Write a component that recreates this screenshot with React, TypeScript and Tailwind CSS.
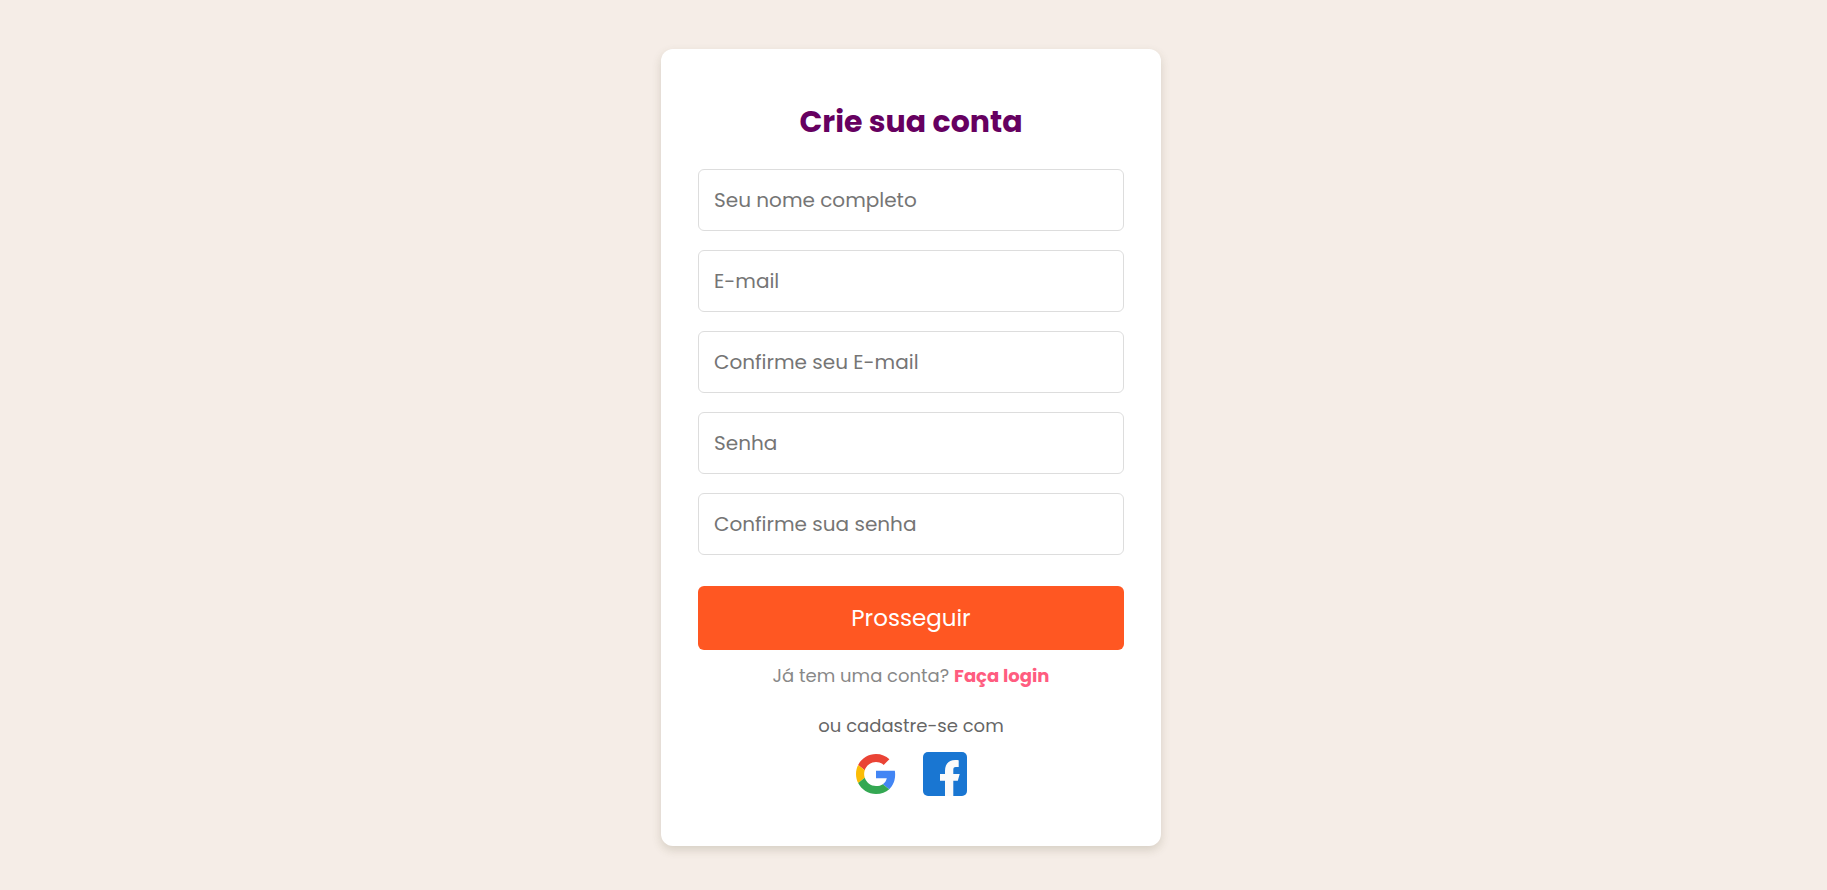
const fields = [
  { id: "name", type: "text", label: "Seu nome completo" },
  { id: "email", type: "email", label: "E-mail" },
  { id: "email-confirm", type: "email", label: "Confirme seu E-mail" },
  { id: "password", type: "password", label: "Senha" },
  { id: "password-confirm", type: "password", label: "Confirme sua senha" },
];

function GoogleIcon() {
  return (
    <svg viewBox="0 0 48 48" className="size-10" aria-hidden="true">
      <path
        fill="#ea4335"
        d="M24 9.5c3.54 0 6.71 1.22 9.21 3.6l6.85-6.85C35.9 2.38 30.47 0 24 0 14.62 0 6.51 5.38 2.56 13.22l7.98 6.19C12.43 13.72 17.74 9.5 24 9.5z"
      />
      <path
        fill="#4285f4"
        d="M46.98 24.55c0-1.57-.15-3.09-.38-4.55H24v9.02h12.94c-.58 2.96-2.26 5.48-4.78 7.18l7.73 6c4.51-4.18 7.09-10.36 7.09-17.65z"
      />
      <path
        fill="#fbbc05"
        d="M10.53 28.59c-.48-1.45-.76-2.99-.76-4.59s.27-3.14.76-4.59l-7.98-6.19C.92 16.46 0 20.12 0 24c0 3.88.92 7.54 2.56 10.78l7.97-6.19z"
      />
      <path
        fill="#34a853"
        d="M24 48c6.48 0 11.93-2.13 15.89-5.81l-7.73-6c-2.15 1.45-4.92 2.3-8.16 2.3-6.26 0-11.57-4.22-13.47-9.91l-7.98 6.19C6.51 42.62 14.62 48 24 48z"
      />
    </svg>
  );
}

function FacebookIcon() {
  return (
    <svg viewBox="0 0 44 44" className="size-11" aria-hidden="true">
      <rect width="44" height="44" rx="5" fill="#1976d2" />
      <path
        fill="#fafafa"
        d="M22 44V28.7h-5V22h5v-3.2C22 12 26 8 32.2 8c1.9 0 3 .1 3.5.2V15h-2.9c-2.1 0-2.5 1-2.5 3.2V22h6.4l-1.9 6.7h-4.5V44z"
      />
    </svg>
  );
}

export default function App() {
  return (
    <main className="flex min-h-screen items-center justify-center bg-[#f5ede7] pt-[49px] pr-[5px] pb-11 font-[Poppins,sans-serif]">
      <section className="w-full max-w-[500px] rounded-xl bg-white px-[37px] pt-[49px] pb-[50px] shadow-[0_4px_10px_rgba(80,70,40,0.18)]">
        <h1 className="text-center text-3xl leading-12 font-bold text-[#660060]">Crie sua conta</h1>
        <form className="mt-[23px]" onSubmit={(event) => event.preventDefault()}>
          <div className="flex flex-col gap-[19px]">
            {fields.map((field) => (
              <input
                key={field.id}
                id={field.id}
                type={field.type}
                aria-label={field.label}
                placeholder={field.label}
                className="block h-[62px] w-full rounded-md border border-[#dddddd] px-[15px] text-xl text-[#333333] placeholder:text-[#757575]"
              />
            ))}
          </div>
          <button type="submit" className="mt-[31px] h-16 w-full rounded-md bg-[#ff5722] text-[23px] text-white">
            Prosseguir
          </button>
        </form>
        <p className="mt-3 text-center text-lg leading-7 text-[#888888]">
          Já tem uma conta?{" "}
          <a href="#login" className="font-bold text-[#ff5c7f]">
            Faça login
          </a>
        </p>
        <p className="mt-[22px] text-center text-lg leading-7 text-[#666666]">ou cadastre-se com</p>
        <div className="mt-3 flex items-center justify-center gap-[27px]">
          <button type="button" aria-label="Google">
            <GoogleIcon />
          </button>
          <button type="button" aria-label="Facebook">
            <FacebookIcon />
          </button>
        </div>
      </section>
    </main>
  );
}
